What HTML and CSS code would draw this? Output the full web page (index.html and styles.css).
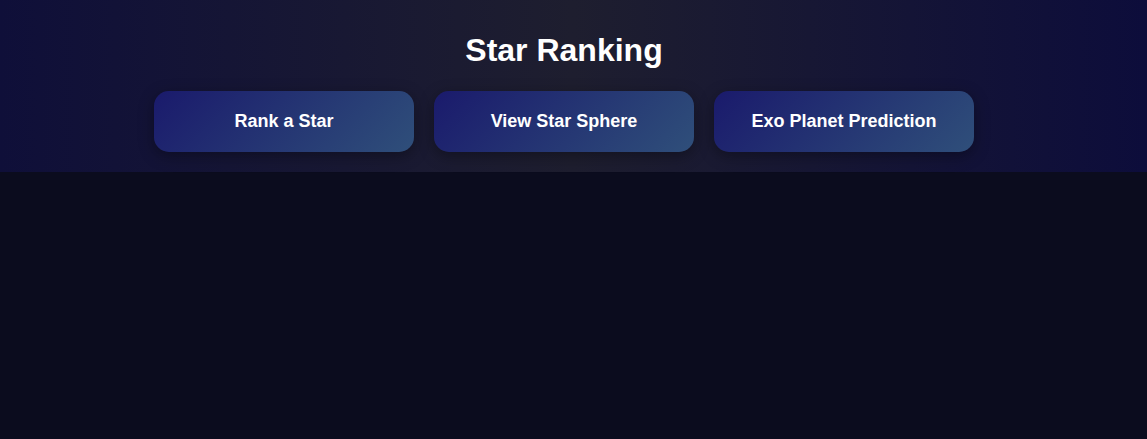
FILE: index.html
```html
<!DOCTYPE html>
<html lang="en">
<head>
<meta charset="utf-8">
<title>Star Ranking</title>
<link rel="stylesheet" href="styles.css">
</head>
<body>
<header class="header">
  <h1 class="title">Star Ranking</h1>
  <nav class="nav">
    <button class="nav-btn">Rank a Star</button>
    <button class="nav-btn">View Star Sphere</button>
    <button class="nav-btn">Exo Planet Prediction</button>
  </nav>
</header>
<main class="main"></main>
</body>
</html>
```

FILE: styles.css
```css
html, body {
  margin: 0;
  padding: 0;
  height: 100%;
}
body {
  background: #0b0c1e;
  font-family: "Liberation Sans", Arial, sans-serif;
  color: #ffffff;
}
.header {
  background: linear-gradient(90deg, #0f0f39 0%, #1e1e2f 50%, #0d0d3b 100%);
  padding: 32px 19px 20px 0;
  display: flex;
  flex-direction: column;
  align-items: center;
}
.title {
  margin: 0 0 22px;
  font-size: 32px;
  font-weight: bold;
  line-height: normal;
  color: #ffffff;
}
.nav {
  display: flex;
  gap: 20px;
}
.nav-btn {
  width: 260px;
  padding: 20px 10px;
  border: none;
  border-radius: 15px;
  background: linear-gradient(135deg, #1a1a6c 0%, #2f4f7a 100%);
  color: #ffffff;
  font-family: "Liberation Sans", Arial, sans-serif;
  font-size: 18px;
  font-weight: bold;
  line-height: normal;
  box-shadow: 0 4px 15px rgba(0, 0, 0, 0.35);
  cursor: pointer;
}
```
